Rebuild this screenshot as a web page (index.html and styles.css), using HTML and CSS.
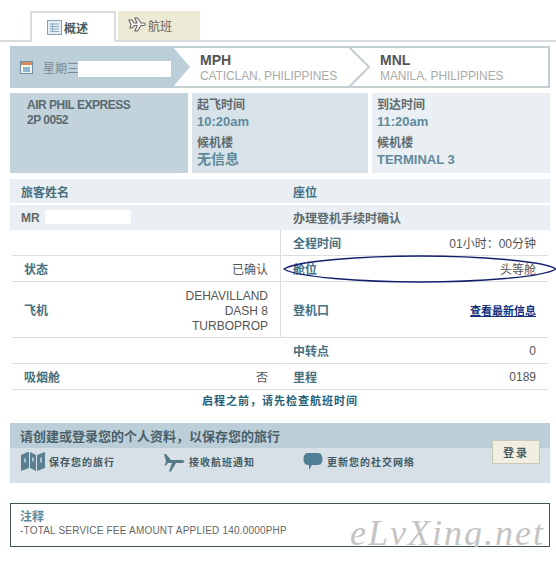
FILE: index.html
```html
<!DOCTYPE html>
<html lang="zh">
<head>
    <meta charset="UTF-8">
    <meta name="viewport" content="width=device-width, initial-scale=1.0">
    <title>航班概述</title>
    <link rel="stylesheet" href="styles.css">
</head>
<body>
    <!-- tabs -->
    <div class="tabs">
        <div class="tab tab-active">
            <svg class="tab-icon" width="15" height="15" viewBox="0 0 15 15"><rect x="0.5" y="0.5" width="14" height="14" fill="#e4eef4" stroke="#7f9fb5"/><path d="M3 4h9M3 6.500h9M3 9h9M3 11.500h9M5.500 3v9" stroke="#8eaabd" fill="none"/></svg>
            <span>概述</span>
        </div>
        <div class="tab tab-other">
            <svg class="tab-icon" width="18" height="18" viewBox="0 0 18 18"><path d="M1 3h3l2 3h3L7 1h2.500l3.500 5h3c1.500 0 1.500 2.500 0 2.500h-3L9.500 14H7l2-5.500H6L4 11H2l1-3.500z" fill="#fff" stroke="#666" stroke-width="1.100"/></svg>
            <span>航班</span>
        </div>
    </div>

    <div class="page">
        <!-- route bar -->
        <div class="route">
            <div class="route-date">
                <svg width="13" height="13" viewBox="0 0 13 13"><rect x="0.500" y="0.500" width="12" height="12" fill="#f6f3e6" stroke="#6f8fa8"/><rect x="1" y="1" width="11" height="3" fill="#d98a5a"/><rect x="3" y="6" width="7" height="5" fill="#8fb7cf"/></svg>
                <span>星期三</span>
                <span class="redact redact-date"></span>
            </div>
            <svg class="route-arrow" width="18" height="42" viewBox="0 0 18 42"><path d="M0 1h18M0 41h18" stroke="#c4d0d4" stroke-width="2"/><polygon points="0,0 18,21 0,42" fill="#bccfd9"/></svg>
            <div class="route-stop stop-from">
                <b>MPH</b>
                <span>CATICLAN, PHILIPPINES</span>
            </div>
            <svg class="route-arrow" width="21" height="42" viewBox="0 0 21 42"><path d="M0 1h21M0 41h21" stroke="#c4d0d4" stroke-width="2"/><polyline points="0,1 20,21 0,41" fill="none" stroke="#c4d0d4" stroke-width="2"/></svg>
            <div class="route-stop stop-to">
                <b>MNL</b>
                <span>MANILA, PHILIPPINES</span>
            </div>
        </div>

        <!-- flight info -->
        <div class="info">
            <div class="info-box info-airline">
                <div>AIR PHIL EXPRESS</div>
                <div>2P 0052</div>
            </div>
            <div class="info-box info-depart">
                <div class="info-label">起飞时间</div>
                <div class="info-value">10:20am</div>
                <div class="info-label info-gap">候机楼</div>
                <div class="info-value info-cjk">无信息</div>
            </div>
            <div class="info-box info-arrive">
                <div class="info-label">到达时间</div>
                <div class="info-value">11:20am</div>
                <div class="info-label info-gap">候机楼</div>
                <div class="info-value">TERMINAL 3</div>
            </div>
        </div>

        <!-- passenger head -->
        <div class="head">
            <div class="head-cell head-title">旅客姓名</div>
            <div class="head-cell head-title">座位</div>
            <div class="head-cell head-name">MR <span class="redact redact-name"></span></div>
            <div class="head-cell head-sub">办理登机手续时确认</div>
        </div>

        <!-- details -->
        <div class="details">
            <div class="cell"></div>
            <div class="cell cell-right"><b>全程时间</b><span>01小时：00分钟</span></div>
            <div class="cell"><b>状态</b><span>已确认</span></div>
            <div class="cell cell-right"><b>舱位</b><span>头等舱</span></div>
            <div class="cell"><b>飞机</b><span class="plane-name">DEHAVILLAND<br>DASH 8<br>TURBOPROP</span></div>
            <div class="cell cell-right"><b>登机口</b><a href="#" class="gate-link">查看最新信息</a></div>
            <div class="cell"></div>
            <div class="cell cell-plain"><b>中转点</b><span>0</span></div>
            <div class="cell"><b>吸烟舱</b><span>否</span></div>
            <div class="cell cell-plain"><b>里程</b><span>0189</span></div>

            <svg class="oval" width="276" height="28" viewBox="0 0 276 28"><path d="M2 14C14 6 80 1 138 1S262 6 274 14C262 22 196 27 138 27S14 22 2 14z" fill="none" stroke="#14206e" stroke-width="1.300"/></svg>
        </div>

        <div class="reminder">启程之前，请先检查航班时间</div>

        <!-- sign in banner -->
        <div class="banner">
            <div class="banner-title">请创建或登录您的个人资料，以保存您的旅行</div>
            <div class="banner-body">
                <div class="perk perk-trip">
                    <svg width="24" height="19" viewBox="0 0 24 19"><path d="M0 3l7-3 1 0v16l-8 3zM9 0l6 3v16l-6-3zM16 3l8-3v16l-8 3z" fill="#5a7f90"/><path d="M3 6l2 1v4l-2-1zM11 5l2 1v4l-2-1zM19 6l2-1v5l-2 1z" fill="#a9c2cd"/></svg>
                    <span>保存您的旅行</span>
                </div>
                <div class="perk perk-alert">
                    <svg width="22" height="20" viewBox="0 0 22 20"><path d="M1 2h2l5 6h5l1 0h5c3 0 3 3 0 3h-6L8 19.500H6l3-8.500H5l-2 2.500H1.500L3 9.500z" fill="#55798a"/></svg>
                    <span>接收航班通知</span>
                </div>
                <div class="perk perk-social">
                    <svg width="20" height="18" viewBox="0 0 20 18"><path d="M5 0h10c6 0 6 12 0 12H9l-3 5v-5H5C-1 12-1 0 5 0z" fill="#4f7f94"/></svg>
                    <span>更新您的社交网络</span>
                </div>
                <button class="login">登录</button>
            </div>
        </div>

        <!-- note -->
        <div class="note">
            <div class="note-title">注释</div>
            <div class="note-text">-TOTAL SERVICE FEE AMOUNT APPLIED 140.0000PHP</div>
            <div class="watermark">eLvXing.net</div>
        </div>
    </div>
</body>
</html>
```

FILE: styles.css
```css
body {
    font-family: "Liberation Sans", "Noto Sans CJK SC", sans-serif;
    font-size: 12px;
    color: #555;
    background: #fff;
    margin: 0;
    padding: 0;
    overflow: hidden;
}
.tabs {
    display: flex;
    gap: 2px;
    height: 29px;
    padding: 11px 0 0 30px;
    border-bottom: 2px solid #d8dcdc;
}
.tab {
    display: flex;
    align-items: center;
    box-sizing: border-box;
    height: 29px;
}
.tab-active {
    width: 86px;
    padding-left: 15px;
    gap: 2px;
    font-weight: bold;
    color: #4a5a60;
    background: #fff;
    border: 2px solid #d8dcdc;
    border-bottom: none;
    height: 31px;
}
.tab-other {
    width: 82px;
    padding-left: 10px;
    gap: 2px;
    color: #666;
    background: #ece9d4;
}
.page {
    width: 540px;
    margin: 4px 0 0 10px;
}
.route {
    display: flex;
    height: 42px;
}
.route-date {
    display: flex;
    align-items: center;
    box-sizing: border-box;
    width: 162px;
    padding-left: 10px;
    background: #bccfd9;
    color: #7b8a92;
    position: relative;
}
.route-date span:first-of-type {
    margin-left: 10px;
}
.redact {
    position: absolute;
    background: #fff;
}
.redact-date {
    left: 68px;
    top: 15px;
    width: 93px;
    height: 16px;
}
.route-arrow {
    flex: none;
    background: #fff;
}
.route-stop {
    box-sizing: border-box;
    padding-top: 5px;
    border-top: 2px solid #c4d0d4;
    border-bottom: 2px solid #c4d0d4;
    line-height: 15px;
    display: flex;
    flex-direction: column;
}
.route-stop b {
    font-size: 14px;
    color: #555;
}
.route-stop span {
    color: #aaa;
    white-space: nowrap;
    letter-spacing: -0.1px;
    margin-top: 1px;
}
.stop-from {
    width: 159px;
    padding-left: 10px;
}
.stop-to {
    flex: 1;
    padding-left: 10px;
    border-right: 2px solid #c4d0d4;
}
.info {
    display: grid;
    grid-template-columns: 178px 176px 178px;
    gap: 4px;
    height: 80px;
    margin-top: 5px;
}
.info-box {
    box-sizing: border-box;
    padding: 5px 5px 0;
    line-height: 15px;
}
.info-airline {
    background: #c3d3db;
    padding-left: 17px;
    font-weight: bold;
    color: #5a6a70;
    letter-spacing: -0.5px;
}
.info-depart {
    background: #d8e3e9;
}
.info-arrive {
    background: #e9eff3;
}
.info-label {
    font-weight: bold;
    color: #5f6b70;
}
.info-value {
    font-size: 13px;
    font-weight: bold;
    color: #5f8a9c;
    margin-top: 1px;
}
.info-cjk {
    font-size: 14px;
}
.info-gap {
    margin-top: 7px;
}
.head {
    display: grid;
    grid-template-columns: 270px 270px;
    margin-top: 6px;
    row-gap: 2px;
}
.head-cell {
    display: flex;
    align-items: center;
    box-sizing: border-box;
    height: 24px;
    padding-left: 11px;
    background: #e9eff3;
    font-weight: bold;
    position: relative;
}
.head-title {
    color: #46707f;
}
.head-cell:nth-child(n+3) {
    height: 25px;
}
.head-name {
    color: #666;
}
.head-sub {
    color: #5f6b70;
}
.head-cell:nth-child(even) {
    padding-left: 13px;
}
.redact-name {
    left: 35px;
    top: 5px;
    width: 86px;
    height: 14px;
}
.details {
    display: grid;
    grid-template-columns: 268px 268px;
    grid-template-rows: 26px 26px 56px 26px 26px;
    margin-left: 2px;
    position: relative;
}
.cell {
    display: flex;
    align-items: center;
    justify-content: space-between;
    box-sizing: border-box;
    padding: 0 12px 0 12px;
    border-bottom: 1px solid #ddd;
    color: #555;
}
.cell b {
    color: #46707f;
}
.cell-right {
    border-left: 1px solid #ddd;
}
.cell-plain {
    border-left: 1px solid transparent;
}
.plane-name {
    text-align: right;
    line-height: 15px;
    padding-top: 3px;
}
.gate-link {
    color: #14307e;
    font-weight: bold;
    font-size: 11px;
}
.oval {
    position: absolute;
    left: 270px;
    top: 25px;
}
.reminder {
    text-align: center;
    font-size: 11px;
    font-weight: bold;
    letter-spacing: 1px;
    color: #1f5f7a;
    margin-top: 4px;
    line-height: 14px;
}
.banner {
    margin-top: 15px;
    background: #d6e0e6;
    height: 60px;
}
.banner-title {
    display: flex;
    align-items: center;
    box-sizing: border-box;
    height: 25px;
    padding-left: 10px;
    background: #bccfd9;
    font-size: 13px;
    font-weight: bold;
    color: #4a6068;
}
.banner-body {
    display: flex;
    align-items: center;
    box-sizing: border-box;
    height: 35px;
    padding-bottom: 8px;
    position: relative;
}
.perk {
    display: flex;
    align-items: center;
    gap: 4px;
    font-size: 10px;
    font-weight: bold;
    letter-spacing: 1px;
    color: #445b63;
}
.perk-trip {
    margin-left: 11px;
    width: 142px;
}
.perk-alert {
    width: 140px;
}
.login {
    position: absolute;
    left: 482px;
    top: -8px;
    width: 48px;
    height: 24px;
    padding: 0;
    background: #f1efdf;
    border: 1px solid #c9c9b5;
    font-family: inherit;
    font-size: 11px;
    font-weight: bold;
    letter-spacing: 2px;
    color: #4a6068;
}
.note {
    box-sizing: border-box;
    height: 44px;
    margin-top: 20px;
    padding: 6px 9px 0;
    border: 1px solid #3d5259;
    position: relative;
}
.note-title {
    font-size: 12px;
    font-weight: bold;
    color: #5f8a9c;
    line-height: 15px;
}
.note-text {
    font-size: 10px;
    letter-spacing: 0.2px;
    line-height: 12px;
    color: #666;
}
.watermark {
    position: absolute;
    left: 339px;
    top: 7px;
    font-family: "Liberation Serif", serif;
    font-style: italic;
    font-size: 36px;
    line-height: 44px;
    letter-spacing: 2px;
    color: #c4c4c4;
    white-space: nowrap;
}
```
